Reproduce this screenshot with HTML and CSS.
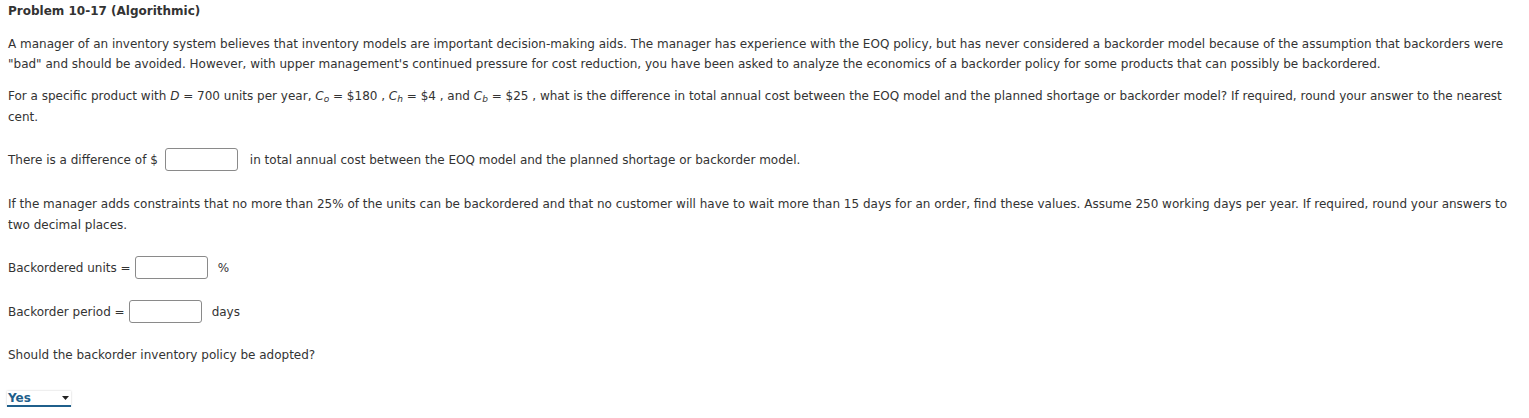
FILE: index.html
```html
<!DOCTYPE html>
<html>
<head>
<meta charset="utf-8">
<link rel="stylesheet" href="styles.css">
</head>
<body>
<div class="page">
  <h1 class="title">Problem 10-17 (Algorithmic)</h1>
  <p class="para p1">A manager of an inventory system believes that inventory models are important decision-making aids. The manager has experience with the EOQ policy, but has never considered a backorder model because of the assumption that backorders were "bad" and should be avoided. However, with upper management's continued pressure for cost reduction, you have been asked to analyze the economics of a backorder policy for some products that can possibly be backordered.</p>
  <p class="para p2">For a specific product with <i>D</i> = 700 units per year, <i>C<sub>o</sub></i> = $180 , <i>C<sub>h</sub></i> = $4 , and <i>C<sub>b</sub></i> = $25 , what is the difference in total annual cost between the EOQ model and the planned shortage or backorder model? If required, round your answer to the nearest cent.</p>
  <div class="row r1"><span>There is a difference of $</span><span class="box b1"></span><span class="after">in total annual cost between the EOQ model and the planned shortage or backorder model.</span></div>
  <p class="para p3">If the manager adds constraints that no more than 25% of the units can be backordered and that no customer will have to wait more than 15 days for an order, find these values. Assume 250 working days per year. If required, round your answers to two decimal places.</p>
  <div class="row r2"><span>Backordered units =</span><span class="box b2"></span><span class="after">%</span></div>
  <div class="row r3"><span>Backorder period =</span><span class="box b2"></span><span class="after">days</span></div>
  <div class="line r4">Should the backorder inventory policy be adopted?</div>
  <div class="select"><span class="sel-text">Yes</span><svg class="arrow" width="7" height="4" viewBox="0 0 7 4"><path d="M0 0H7L3.5 4Z" fill="#222"/></svg></div>
</div>
</body>
</html>
```
FILE: styles.css
```css
html, body { margin: 0; padding: 0; background: #fff; }
.page {
  padding: 0 8px;
  font-family: "DejaVu Sans", Verdana, sans-serif;
  font-size: 12px;
  color: #333;
}
.title {
  font-size: 12px;
  font-weight: bold;
  margin: 0;
  padding-top: 3px;
  line-height: 16px;
  color: #333;
}
.para { margin: 0; line-height: 21px; }
.p1 { margin-top: 15px; line-height: 20px; }
.p2 { margin-top: 12px; }
sub { font-size: 9px; vertical-align: -2px; line-height: 0; }
.row { display: flex; align-items: center; height: 23px; white-space: nowrap; }
.line { line-height: 20px; }
.r1 { margin-top: 20px; }
.p3 { margin-top: 23px; }
.r2 { margin-top: 20px; }
.r3 { margin-top: 21px; }
.r4 { margin-top: 22px; }
.box {
  display: inline-block;
  width: 71px;
  height: 21px;
  border: 1px solid #8a8a8a;
  border-radius: 3px;
  background: #fff;
  margin-left: 7px;
  margin-right: 12px;
}
.b2 { margin-left: 4px; margin-right: 10px; }
.select {
  margin-top: 26px;
  margin-left: -1px;
  width: 64px;
  height: 16px;
  display: flex;
  align-items: center;
  justify-content: space-between;
  border-bottom: 2px solid #1f5f8b;
  box-shadow: 0 0 2px #ccc;
  box-sizing: border-box;
  padding-right: 2px;
}
.sel-text { color: #1f5f8b; font-weight: bold; font-size: 12px; padding-left: 1px; line-height: 14px; }
```
